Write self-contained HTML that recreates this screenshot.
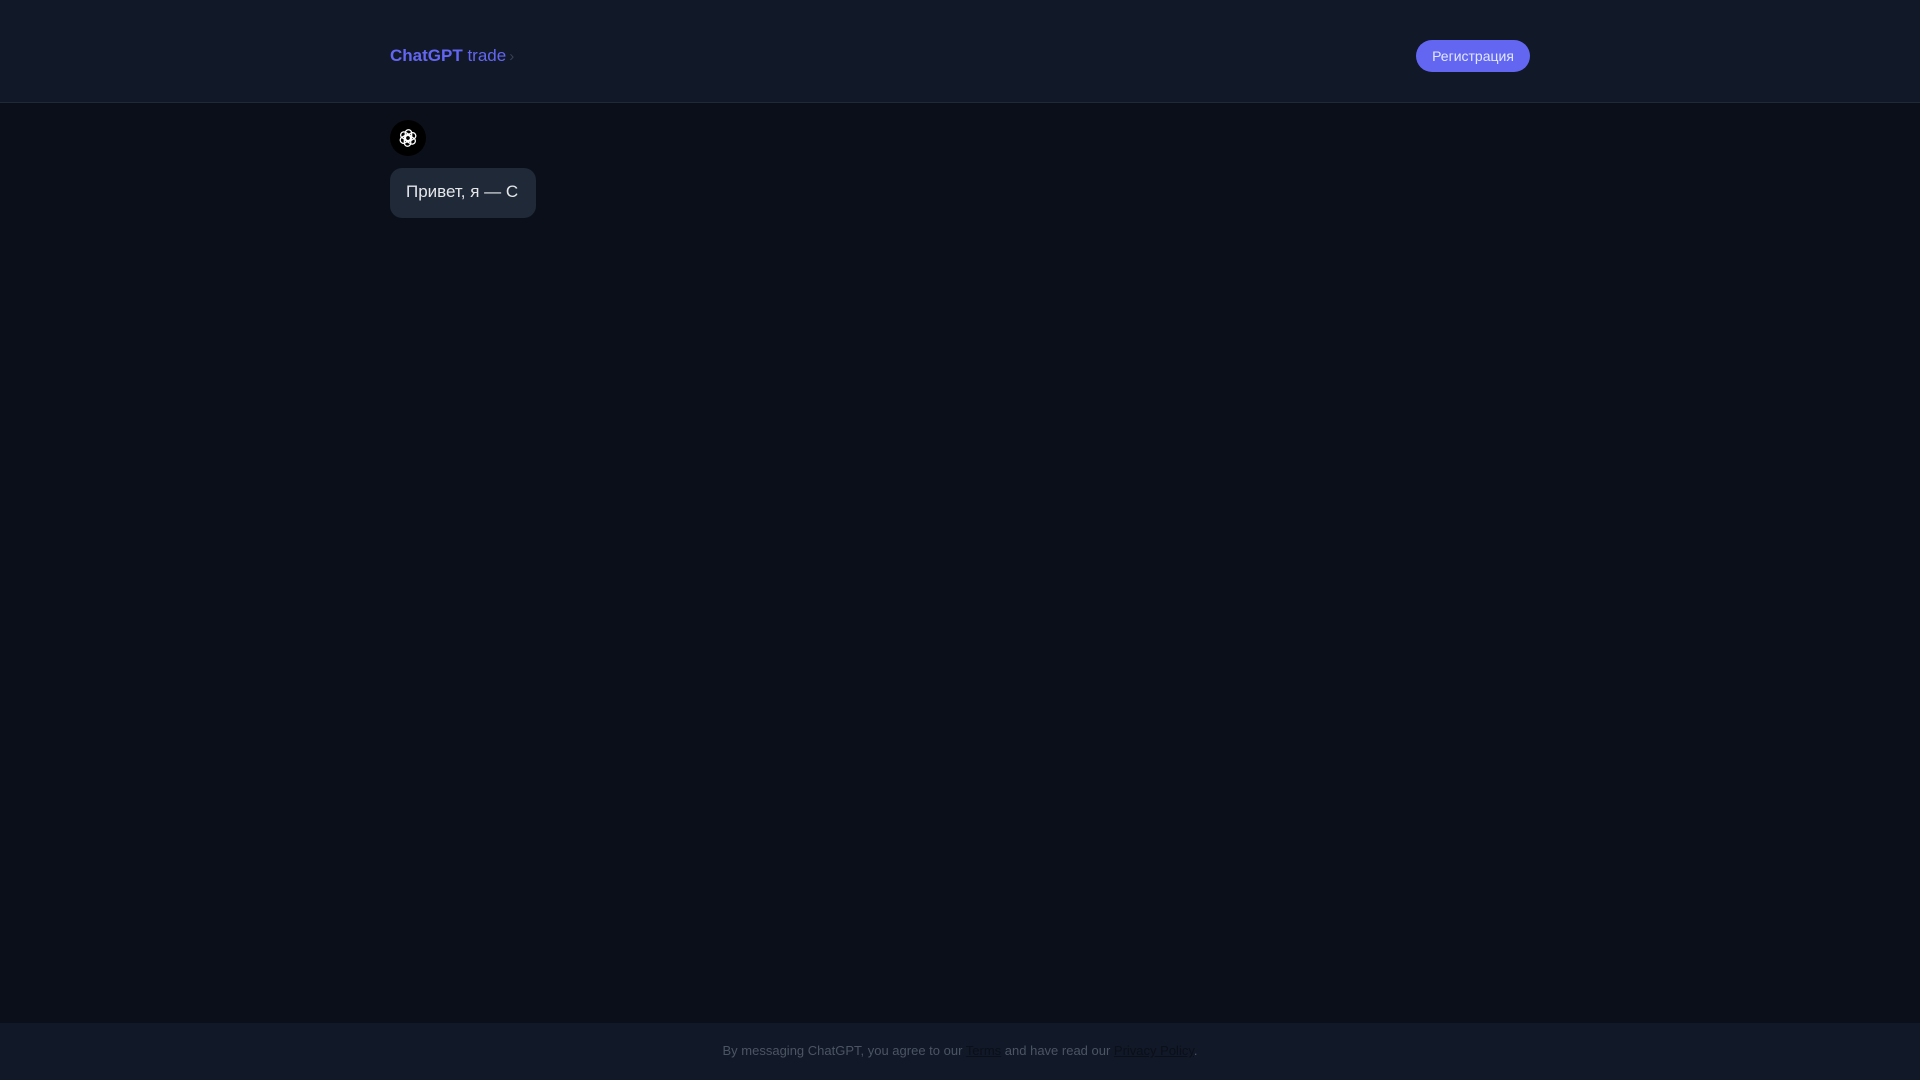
<!DOCTYPE html>
<html><head><meta charset="utf-8"><style>
*{margin:0;padding:0;box-sizing:border-box}
body{width:1920px;height:1080px;background:#0b0f19;font-family:"Liberation Sans",sans-serif;position:relative;overflow:hidden}
.hdr{position:absolute;left:0;top:0;width:1920px;height:103px;background:#111827;border-bottom:1px solid #1f2937}
.logo{position:absolute;left:390px;top:46px;font-size:17px;color:#6366f1}
.logo b{font-weight:bold}
.logo .c{color:#374151;font-size:15px;margin-left:3px}
.btn{position:absolute;left:1416px;top:40px;width:114px;height:32px;border-radius:16px;background:#6366f1;color:#e0e7ff;font-size:14px;line-height:32px;text-align:center}
.av{position:absolute;left:390px;top:120px;width:36px;height:36px;border-radius:50%;background:#000;display:flex;align-items:center;justify-content:center}
.bub{position:absolute;left:390px;top:168px;width:146px;height:50px;border-radius:12px;background:#1f2937;color:#e5e7eb;font-size:17px;line-height:48px;padding-left:16px}
.ftr{position:absolute;left:0;top:1023px;width:1920px;height:57px;background:#111827;text-align:center;font-size:13px;color:#4b5563;line-height:56px}
.ftr u{color:#0b0f19}
</style></head><body>
<div class="hdr"><div class="logo"><b>ChatGPT</b> trade<span class="c">›</span></div><div class="btn">Регистрация</div></div>
<div class="av"><svg width="22" height="22" viewBox="0 0 24 24" fill="none" stroke="#fff" stroke-width="1.4"><g transform="translate(12 12)"><rect x="-3" y="-9" width="7" height="12" rx="3.5" transform="rotate(0)"/><rect x="-3" y="-9" width="7" height="12" rx="3.5" transform="rotate(60)"/><rect x="-3" y="-9" width="7" height="12" rx="3.5" transform="rotate(120)"/><rect x="-3" y="-9" width="7" height="12" rx="3.5" transform="rotate(180)"/><rect x="-3" y="-9" width="7" height="12" rx="3.5" transform="rotate(240)"/><rect x="-3" y="-9" width="7" height="12" rx="3.5" transform="rotate(300)"/></g></svg></div>
<div class="bub">Привет, я — С</div>
<div class="ftr">By messaging ChatGPT, you agree to our <u>Terms</u> and have read our <u>Privacy Policy</u>.</div>
</body></html>
